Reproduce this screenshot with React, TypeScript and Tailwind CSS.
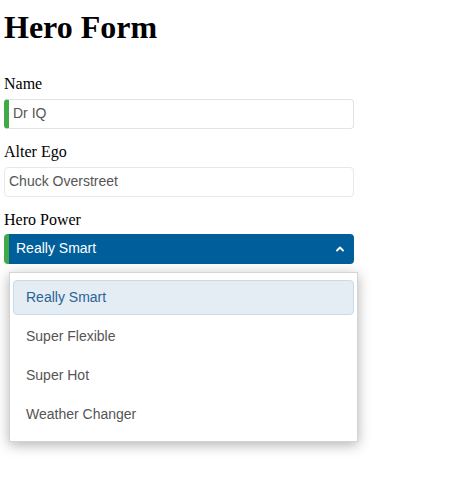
import React from "react";

const serif = { fontFamily: '"Liberation Serif", "Times New Roman", serif' };

function ChevronUp() {
  return (
    <svg width="10" height="10" viewBox="0 0 10 10" className="block">
      <path d="M2 6.5 L5 3.5 L8 6.5" fill="none" stroke="white" strokeWidth="1.8" strokeLinecap="round" strokeLinejoin="round" />
    </svg>
  );
}

export default function App() {
  const options = ["Really Smart", "Super Flexible", "Super Hot", "Weather Changer"];
  return (
    <div className="bg-white w-[450px] h-[496px] pl-[4px] text-black" style={serif}>
      <h1 className="pt-[9px] text-[32px] leading-[37px] font-bold">Hero Form</h1>

      <div className="mt-[28px] text-[16px] leading-[19px]">Name</div>
      <div className="mt-[6px] w-[350px] h-[30px] rounded-[4px] border border-[#e3e3e3] border-l-[5px] border-l-[#42a948] flex items-center pl-[4px] pb-[1px] text-[14px] text-[#555]" style={{ fontFamily: '"Liberation Sans", Arial, sans-serif' }}>
        Dr IQ
      </div>

      <div className="mt-[13px] text-[16px] leading-[19px]">Alter Ego</div>
      <div className="mt-[6px] w-[350px] h-[30px] rounded-[4px] border border-[#e8e8e8] flex items-center pl-[4px] pb-[1px] text-[14px] text-[#555]" style={{ fontFamily: '"Liberation Sans", Arial, sans-serif' }}>
        Chuck Overstreet
      </div>

      <div className="mt-[13px] text-[16px] leading-[19px]">Hero Power</div>
      <div className="relative mt-[5px] w-[350px]">
        <div className="h-[30px] rounded-[4px] bg-[#005e9b] border-l-[5px] border-l-[#42a948] flex items-center justify-between pl-[7px] pr-[9px] pb-[1px] text-[14px] text-white" style={{ fontFamily: '"Liberation Sans", Arial, sans-serif' }}>
          <span>Really Smart</span>
          <ChevronUp />
        </div>
        <div className="absolute left-[5px] top-[38px] w-[349px] bg-white border border-[#d4d4d4] shadow-[0_3px_12px_rgba(0,0,0,0.3)] pt-[7px] pb-[9px] px-[3px] flex flex-col gap-[4px]" style={{ fontFamily: '"Liberation Sans", Arial, sans-serif' }}>
          {options.map((o, i) => (
            <div
              key={o}
              className={
                i === 0
                  ? "h-[35px] flex items-center pl-[12px] pb-[1px] rounded-[4px] border border-[#c9dbea] bg-[#e4ecf4] text-[#2a6496] text-[14px]"
                  : "h-[35px] flex items-center pl-[13px] pb-[1px] text-[#555] text-[14px]"
              }
            >
              {o}
            </div>
          ))}
        </div>
      </div>
    </div>
  );
}
